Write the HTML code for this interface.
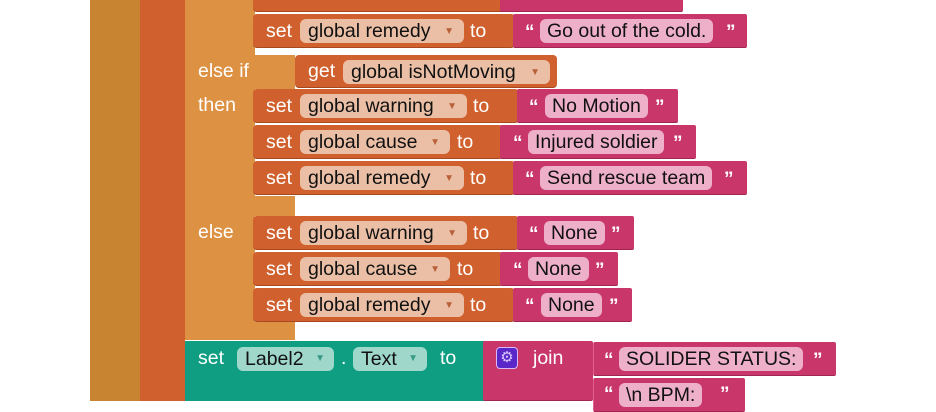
<!DOCTYPE html>
<html><head><meta charset="utf-8"><style>
body{margin:0;width:936px;height:401px;overflow:hidden;background:#fff;position:relative;font-family:"Liberation Sans",sans-serif;font-size:19.5px}
div{position:absolute;box-sizing:border-box}
.o{background:#d0602d;border-bottom:1px solid #a8481f;border-radius:4px}
.p{background:#c8366a;border-radius:2px;border-bottom:1px solid #a02550}
.t{color:#fff;line-height:34px}
.f{background:#ebbfa5;color:#111;border-radius:6px;height:24px;line-height:24px;padding-left:8px;white-space:nowrap}
.f i{font-style:normal;color:#b8603a;font-size:10px;position:absolute;right:10px;top:1px}
.pf{background:#eeafc8;color:#111;border-radius:6px;height:24px;line-height:24px;padding:0 7px;white-space:nowrap}
.q{color:#fff;font-size:19px;font-weight:bold;line-height:30px}
</style></head><body>
<div style="left:90px;top:0;width:50px;height:401px;background:#c98432"></div>
<div style="left:140px;top:0;width:45px;height:401px;background:#d0602d"></div>
<div style="left:185px;top:0;width:70px;height:340px;background:#dd9142"></div>
<div style="left:185px;top:196px;width:110px;height:20px;background:#dd9142"></div>
<div style="left:185px;top:322px;width:110px;height:18px;background:#dd9142"></div>
<div style="left:185px;top:55px;width:110px;height:34px;background:#dd9142"></div>
<div class="t" style="left:198px;top:54px">else if</div>
<div class="t" style="left:198px;top:88px">then</div>
<div class="t" style="left:198px;top:215px">else</div>

<div class="o" style="left:253px;top:-20px;width:260px;height:32px"></div>
<div class="p" style="left:500px;top:-20px;width:183px;height:32px"></div>
<div class="p" style="left:500px;top:-20px;width:210px;height:12px"></div>

<div class="o" style="left:253px;top:14px;width:262px;height:34px"></div><div class="t" style="left:266px;top:14px">set</div><div class="f" style="left:300px;top:19px;width:164px">global remedy<i>▼</i></div><div class="t" style="left:470px;top:14px">to</div>
<div class="p" style="left:513px;top:14px;width:234px;height:34px"></div><div class="q" style="left:525px;top:18px">“</div><div class="pf" style="left:540px;top:19px">Go out of the cold.</div><div class="q" style="left:726px;top:18px">”</div>

<div class="o" style="left:295px;top:55px;width:262px;height:33px"></div><div class="t" style="left:308px;top:54px">get</div><div class="f" style="left:343px;top:60px;width:207px">global isNotMoving<i>▼</i></div>

<div class="o" style="left:253px;top:89px;width:266px;height:34px"></div><div class="t" style="left:266px;top:89px">set</div><div class="f" style="left:300px;top:94px;width:167px">global warning<i>▼</i></div><div class="t" style="left:473px;top:89px">to</div>
<div class="p" style="left:517px;top:89px;width:161px;height:34px"></div><div class="q" style="left:529px;top:93px">“</div><div class="pf" style="left:545px;top:94px">No Motion</div><div class="q" style="left:655px;top:93px">”</div>

<div class="o" style="left:253px;top:125px;width:250px;height:34px"></div><div class="t" style="left:266px;top:125px">set</div><div class="f" style="left:300px;top:130px;width:150px">global cause<i>▼</i></div><div class="t" style="left:457px;top:125px">to</div>
<div class="p" style="left:500px;top:125px;width:196px;height:34px"></div><div class="q" style="left:513px;top:129px">“</div><div class="pf" style="left:528px;top:130px">Injured soldier</div><div class="q" style="left:673px;top:129px">”</div>

<div class="o" style="left:253px;top:161px;width:262px;height:34px"></div><div class="t" style="left:266px;top:161px">set</div><div class="f" style="left:300px;top:166px;width:164px">global remedy<i>▼</i></div><div class="t" style="left:470px;top:161px">to</div>
<div class="p" style="left:513px;top:161px;width:234px;height:34px"></div><div class="q" style="left:525px;top:165px">“</div><div class="pf" style="left:540px;top:166px">Send rescue team</div><div class="q" style="left:724px;top:165px">”</div>

<div class="o" style="left:253px;top:216px;width:266px;height:34px"></div><div class="t" style="left:266px;top:216px">set</div><div class="f" style="left:300px;top:221px;width:167px">global warning<i>▼</i></div><div class="t" style="left:473px;top:216px">to</div>
<div class="p" style="left:517px;top:216px;width:117px;height:34px"></div><div class="q" style="left:529px;top:220px">“</div><div class="pf" style="left:544px;top:221px">None</div><div class="q" style="left:611px;top:220px">”</div>

<div class="o" style="left:253px;top:252px;width:250px;height:34px"></div><div class="t" style="left:266px;top:252px">set</div><div class="f" style="left:300px;top:257px;width:150px">global cause<i>▼</i></div><div class="t" style="left:457px;top:252px">to</div>
<div class="p" style="left:500px;top:252px;width:118px;height:34px"></div><div class="q" style="left:513px;top:256px">“</div><div class="pf" style="left:528px;top:257px">None</div><div class="q" style="left:595px;top:256px">”</div>

<div class="o" style="left:253px;top:288px;width:262px;height:34px"></div><div class="t" style="left:266px;top:288px">set</div><div class="f" style="left:300px;top:293px;width:164px">global remedy<i>▼</i></div><div class="t" style="left:470px;top:288px">to</div>
<div class="p" style="left:513px;top:288px;width:119px;height:34px"></div><div class="q" style="left:525px;top:292px">“</div><div class="pf" style="left:541px;top:293px">None</div><div class="q" style="left:609px;top:292px">”</div>

<div style="left:185px;top:341px;width:300px;height:60px;background:#0f9e82"></div>
<div class="t" style="left:198px;top:341px">set</div>
<div style="left:237px;top:347px;width:97px;height:24px;background:#9fd8cb;border-radius:6px;line-height:24px;padding-left:8px;color:#111">Label2<span style="position:absolute;right:9px;color:#3a9a86;font-size:10px">▼</span></div>
<div class="t" style="left:341px;top:341px">.</div>
<div style="left:353px;top:347px;width:74px;height:24px;background:#9fd8cb;border-radius:6px;line-height:24px;padding-left:8px;color:#111">Text<span style="position:absolute;right:9px;color:#3a9a86;font-size:10px">▼</span></div>
<div class="t" style="left:440px;top:341px">to</div>
<div class="p" style="left:483px;top:341px;width:110px;height:60px"></div>
<div style="left:496px;top:347px;width:22px;height:22px;background:#5a28c8;border:1px solid #d8b8f8;border-radius:4px;color:#d8c8ff;font-size:15px;line-height:20px;text-align:center">⚙</div>
<div class="t" style="left:533px;top:341px">join</div>
<div class="p" style="left:593px;top:342px;width:243px;height:34px;border-left:1px solid #e06090"></div><div class="q" style="left:604px;top:346px">“</div><div class="pf" style="left:619px;top:347px">SOLIDER STATUS:</div><div class="q" style="left:813px;top:346px">”</div>
<div class="p" style="left:593px;top:378px;width:152px;height:34px;border-left:1px solid #e06090"></div><div class="q" style="left:604px;top:380px">“</div><div class="pf" style="left:619px;top:383px">\n BPM:</div><div class="q" style="left:720px;top:380px">”</div>
</body></html>
